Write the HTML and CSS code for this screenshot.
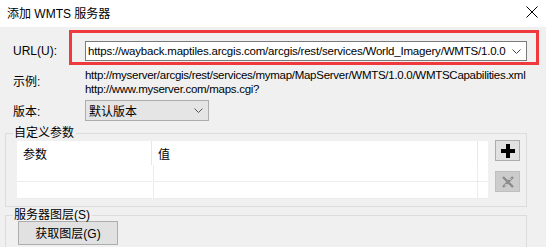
FILE: index.html
```html
<!DOCTYPE html>
<html>
<head>
<meta charset="utf-8">
<link rel="stylesheet" href="styles.css">
</head>
<body>
<div class="window">
  <div class="titlebar">
    <span class="title">添加 WMTS 服务器</span>
    <svg class="close" width="12" height="12" viewBox="0 0 12 12"><path d="M0.5 0.5 L11.5 11.5 M11.5 0.5 L0.5 11.5" stroke="#000" stroke-width="1" fill="none"/></svg>
  </div>
  <div class="content">
    <div class="row url-row">
      <span class="label">URL(U):</span>
      <div class="input">
        <span class="input-text">https://wayback.maptiles.arcgis.com/arcgis/rest/services/World_Imagery/WMTS/1.0.0</span>
        <svg class="chev" width="9" height="5" viewBox="0 0 9 5"><path d="M0.5 0.5 L4.5 4.5 L8.5 0.5" stroke="#444" fill="none"/></svg>
      </div>
      <div class="highlight"></div>
    </div>
    <div class="row example-row">
      <span class="label ex-label">示例:</span>
      <div class="examples">
        <div>http://myserver/arcgis/rest/services/mymap/MapServer/WMTS/1.0.0/WMTSCapabilities.xml</div>
        <div>http://www.myserver.com/maps.cgi?</div>
      </div>
    </div>
    <div class="row version-row">
      <span class="label">版本:</span>
      <div class="combo">
        <span>默认版本</span>
        <svg class="chev" width="9" height="5" viewBox="0 0 9 5"><path d="M0.5 0.5 L4.5 4.5 L8.5 0.5" stroke="#555" fill="none"/></svg>
      </div>
    </div>
    <fieldset class="group group1">
      <legend>自定义参数</legend>
      <div class="group1-body">
        <div class="grid">
          <div class="cell head c1">参数</div>
          <div class="cell head c2">值</div>
          <div class="cell head c3"></div>
          <div class="cell r c1"></div>
          <div class="cell r c2"></div>
          <div class="cell r c3"></div>
          <div class="cell r c1"></div>
          <div class="cell r c2"></div>
          <div class="cell r c3"></div>
        </div>
        <div class="side-buttons">
          <div class="sbtn plus">
            <svg width="14" height="14" viewBox="0 0 14 14"><path d="M5 0 H9 V5 H14 V9 H9 V14 H5 V9 H0 V5 H5 Z" fill="#000"/></svg>
          </div>
          <div class="sbtn del">
            <svg width="14" height="14" viewBox="0 0 14 14"><path d="M2 2 L12 12 M12 2 L2 12" stroke="#8c8c8c" stroke-width="2.4" fill="none"/><path d="M4 10.5 L5.5 9 M10 3.5 L8.5 5" stroke="#fff" stroke-width="1" fill="none"/></svg>
          </div>
        </div>
      </div>
    </fieldset>
    <fieldset class="group group2">
      <legend>服务器图层(S)</legend>
      <div class="btn">获取图层(G)</div>
    </fieldset>
  </div>
</div>
</body>
</html>
```
FILE: styles.css
```css
* { box-sizing: border-box; }
html, body { margin: 0; padding: 0; }
body {
  width: 546px;
  height: 247px;
  overflow: hidden;
  background: #f0f0f0;
  font-family: "Liberation Sans", "Noto Sans CJK SC", sans-serif;
  font-size: 12px;
  color: #000;
}
.window { width: 546px; height: 247px; display: flex; flex-direction: column; overflow: hidden; }
.titlebar {
  height: 27px;
  background: #fff;
  display: flex;
  align-items: center;
  justify-content: space-between;
  padding: 0 8px 2px 7px;
  flex-shrink: 0;
}
.title { font-size: 12px; }
.close { margin-top: -1px; }
.content { padding: 0 19px 0 5px; display: flex; flex-direction: column; }
.row { display: flex; align-items: center; position: relative; }
.label { width: 80px; padding-left: 8px; flex-shrink: 0; }
.url-row { margin-top: 14px; height: 20px; }
.input {
  width: 442px;
  height: 20px;
  border: 1px solid #7a7a7a;
  background: #fff;
  display: flex;
  align-items: center;
  justify-content: space-between;
  padding: 0 5px 0 2px;
}
.input-text { white-space: nowrap; font-size: 11.5px; letter-spacing: -0.2px; }
.highlight {
  position: absolute;
  left: 64px;
  top: -11px;
  width: 470px;
  height: 35px;
  border: 3px solid #f0393d;
  pointer-events: none;
}
.example-row { margin-top: 7px; align-items: flex-start; }
.ex-label { padding-top: 4px; }
.examples { line-height: 14px; white-space: nowrap; font-size: 11.5px; letter-spacing: -0.28px; }
.version-row { margin-top: 4px; height: 21px; }
.combo {
  width: 124px;
  height: 21px;
  border: 1px solid #adadad;
  background: #e5e5e5;
  display: flex;
  align-items: center;
  justify-content: space-between;
  padding: 0 5px 0 3px;
}
.group {
  margin: 0;
  padding: 0;
  border: 1px solid #dcdcdc;
  width: 522px;
  min-width: 0;
}
.group legend {
  padding: 0 2px 0 1px;
  margin-left: 7px;
  line-height: 14px;
}
.group1 { margin-top: 5px; height: 81px; }
.group1-body { display: flex; padding: 4px 0 0 11px; margin-top: -3px; }
.grid {
  width: 471px;
  height: 58px;
  background: #fff;
  display: grid;
  grid-template-columns: 135px 326px 10px;
  grid-template-rows: 24px 17px 17px;
}
.cell.head { padding: 4px 0 0 6px; border-right: 1px solid #e8e8e8; }
.cell.head.c3 { border-right: none; }
.cell.r { border-right: 1px solid #ececec; border-bottom: 1px solid #ececec; }
.cell.r.c1 { border-right: none; }
.cell.r.c2 { border-left: 1px solid #ececec; margin-left: 1px; }
.cell.r.c3 { border-right: none; }
.side-buttons { display: flex; flex-direction: column; gap: 10px; margin-left: 7px; margin-top: -1px; }
.sbtn {
  width: 25px;
  height: 21px;
  display: flex;
  align-items: center;
  justify-content: center;
}
.plus { background: #e1e1e1; border: 1px solid #adadad; }
.del { background: #cccccc; border: 1px solid #bfbfbf; }
.group2 { margin-top: 1px; height: 60px; }
.btn {
  margin: -1px 0 0 12px;
  width: 100px;
  height: 24px;
  background: #e1e1e1;
  border: 1px solid #adadad;
  display: flex;
  align-items: center;
  justify-content: center;
  padding-bottom: 1px;
}
```
